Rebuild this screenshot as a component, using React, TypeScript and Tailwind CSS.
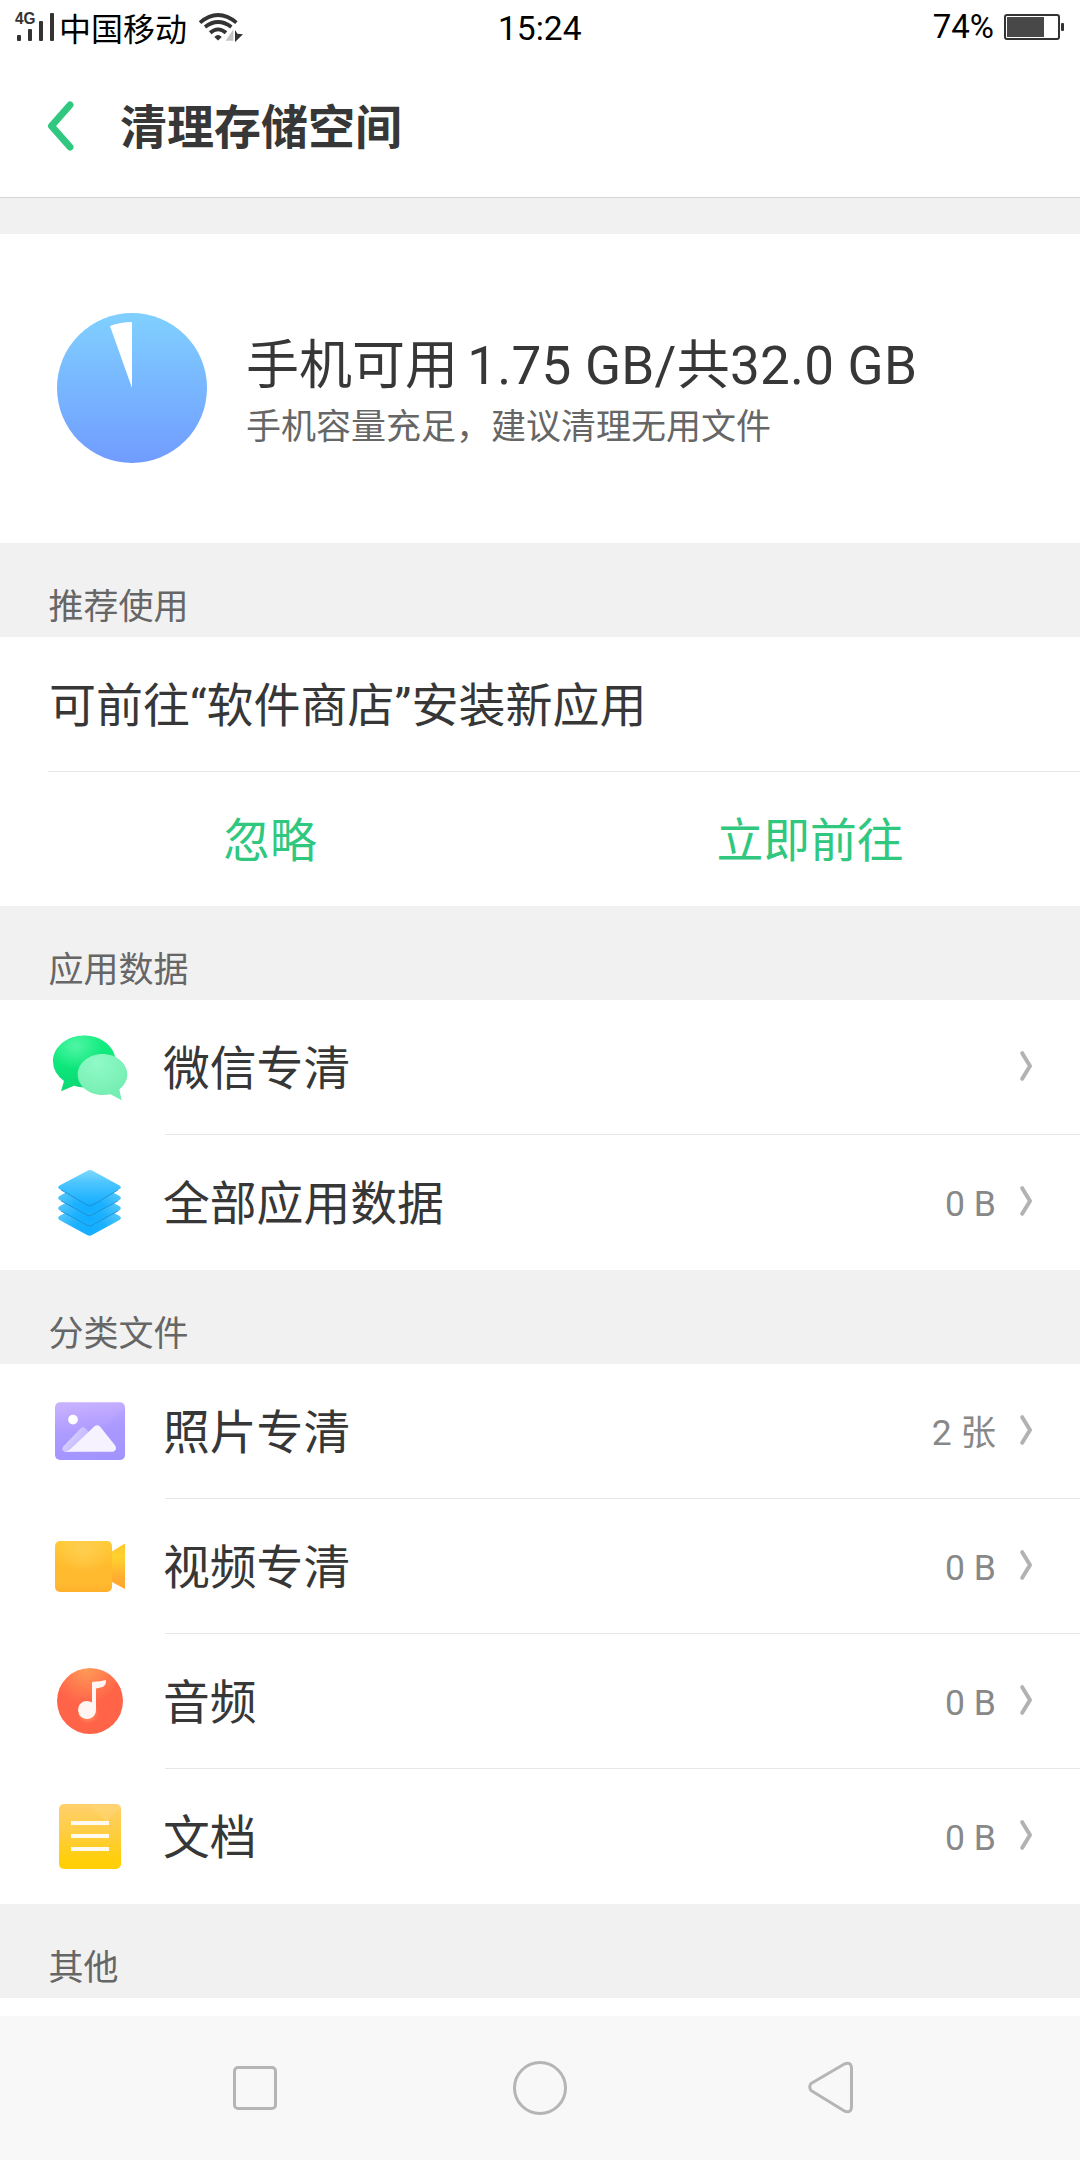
import React from 'react'

type Item = {
  label: string
  value?: string
  icon: React.ReactNode
}

function StatusBar() {
  return (
    <div className="flex h-[60px] items-start pl-[14px] pr-[16px] text-black">
      {/* Signal */}
      <svg className="mt-[10px] h-[34px] w-[42px]" viewBox="14 10 42 34" fill="#333">
        <text x="15" y="24.3" fontSize="16.5" fontWeight="700" fontFamily="Liberation Sans, sans-serif" textLength="20.5" lengthAdjust="spacingAndGlyphs">4G</text>
        <rect x="17" y="35" width="4" height="6" rx="1" />
        <rect x="28" y="29" width="4" height="12" rx="1" />
        <rect x="39" y="21" width="4" height="20" rx="1" />
        <rect x="50" y="13" width="4" height="28" rx="1" />
      </svg>
      <span className="ml-[3px] mt-[10px] w-[128px] text-[32px] leading-[40px]">中国移动</span>
      {/* Wifi */}
      <svg className="ml-[9px] mt-[10px] h-[34px] w-[52px]" viewBox="196 10 52 34" fill="none">
        <g stroke="#333" strokeWidth="3.8">
          <path d="M200 22.6Q218 7.4 236.400 22.600" />
          <path d="M205 27Q218 17 231.400 27" />
          <path d="M210.200 32.800Q218 26 226 32.800" />
        </g>
        <path d="M214.300 37Q218 32.800 221.800 37L218 40.500Z" fill="#333" />
        <path d="M225.600 40.800L233.400 29.200V40.800Z" fill="#c4c4c4" />
        <path d="M235 30L237.500 33.800L243 34.200L235 42Z" fill="#333" />
      </svg>
      <span className="ml-[250px] mt-[9px] text-[33.6px] leading-[40px]">15:24</span>
      <div className="ml-auto flex">
        <span className="mt-[7px] text-[33px] leading-[40px]">74%</span>
        <svg className="ml-[8px] mt-[12px] h-[30px] w-[62px]" viewBox="1002 12 62 30">
          <rect x="1005" y="15" width="54" height="24" rx="2" fill="none" stroke="#333" strokeWidth="2" />
          <rect x="1007" y="17" width="37" height="20" fill="#484848" />
          <rect x="1061" y="23" width="3" height="8" rx="1" fill="#333" />
        </svg>
      </div>
    </div>
  )
}

function TitleBar() {
  return (
    <div className="flex h-[138px] border-b border-[#d5d5d5] pl-[46px]">
      <svg className="mt-[38px] h-[56px] w-[30px]" viewBox="46 98 30 56" fill="none">
        <path d="M70 105L51.500 126L70 147" stroke="#30c77f" strokeWidth="7" strokeLinecap="round" strokeLinejoin="round" />
      </svg>
      <h1 className="ml-[44px] mt-[38px] text-[47px] leading-[60px] font-bold">清理存储空间</h1>
    </div>
  )
}

function StorageSummary() {
  return (
    <div className="flex h-[309px] bg-white pl-[57px]">
      <svg className="mt-[79px] h-[150px] w-[150px]" viewBox="0 0 150 150">
        <defs>
          <linearGradient id="pie" x1="0" y1="0" x2="0" y2="1">
            <stop offset="0" stopColor="#80d0ff" />
            <stop offset="1" stopColor="#709cff" />
          </linearGradient>
        </defs>
        <circle cx="75" cy="75" r="75" fill="url(#pie)" />
        <path d="M75 75L53 13Q63.500 9 75 9Z" fill="#fff" />
      </svg>
      <div className="ml-[39px]">
        <p className="mt-[100px] text-[53px] leading-[64px]">
          手机可用 <span className="-ml-[4px] tracking-[0.25px]">1.75 GB/共32.0 GB</span>
        </p>
        <p className="mt-[6px] text-[35px] leading-[48px] text-[#666]">手机容量充足，建议清理无用文件</p>
      </div>
    </div>
  )
}

function SectionLabel({ children }: { children: React.ReactNode }) {
  return <h2 className="h-[94px] pl-[48.5px] pt-[41px] text-[35px] leading-[48px] text-[#666]">{children}</h2>
}

function Chevron() {
  return (
    <svg className="h-[32px] w-[14px]" viewBox="0 0 14 32" fill="none">
      <path d="M3.200 3.200L11 16L3.200 28.800" stroke="#b2b2b2" strokeWidth="4" strokeLinecap="round" strokeLinejoin="round" />
    </svg>
  )
}

function ItemList({ items }: { items: Item[] }) {
  return (
    <div className="bg-white">
      {items.map((item, i) => (
        <div key={item.label} className="h-[135px]">
          <div className="flex h-[134px] items-center pl-[48px] pr-[47px]">
            {item.icon}
            <span className="ml-[31px] pt-[4px] text-[46.8px] leading-[60px]">{item.label}</span>
            <span className="ml-auto pt-[4px] text-[35.5px] leading-[48px] text-[#888]">{item.value}</span>
            <div className="-mt-[2px] ml-[23px]">
              <Chevron />
            </div>
          </div>
          {i < items.length - 1 && <div className="ml-[165px] h-px bg-[#e6e6e6]" />}
        </div>
      ))}
    </div>
  )
}

function WechatIcon() {
  return (
    <svg className="h-[84px] w-[84px]" viewBox="0 0 84 84">
      <defs>
        <linearGradient id="wxBig" x1="0" y1="0" x2="0" y2="1">
          <stop offset="0" stopColor="#12ee80" />
          <stop offset="0.500" stopColor="#0de77b" />
          <stop offset="1" stopColor="#0ad873" />
        </linearGradient>
        <radialGradient id="wxShine" cx="0.360" cy="0.200" r="0.450" gradientTransform="rotate(-18 0.36 0.2)">
          <stop offset="0" stopColor="#4ff5a5" />
          <stop offset="1" stopColor="#4ff5a5" stopOpacity="0" />
        </radialGradient>
        <radialGradient id="wxSmall" cx="0.400" cy="0.200" r="0.700">
          <stop offset="0" stopColor="#90fac7" />
          <stop offset="1" stopColor="#76eeb3" />
        </radialGradient>
      </defs>
      <path d="M36.300 10.400C53.600 10.400 67.600 21.900 67.600 36.300S53.600 62.400 36.300 62.400Q31 62.400 26 60.800L13 66.300L16 56Q5 48 5 36.300C5 21.900 19 10.400 36.300 10.400Z" fill="url(#wxBig)" />
      <ellipse cx="36.300" cy="36.400" rx="31" ry="25.700" fill="url(#wxShine)" />
      <path d="M54.500 29C68.200 29 79.300 38.200 79.300 49.500Q79.300 58 71.400 64.400L73.700 75.300L62.500 69.200Q58.500 70 54.500 70C40.800 70 29.700 60.800 29.700 49.500S40.800 29 54.500 29Z" fill="url(#wxSmall)" />
    </svg>
  )
}

function LayersIcon() {
  return (
    <svg className="h-[84px] w-[84px]" viewBox="0 0 84 84">
      <defs>
        <linearGradient id="layTop" x1="0" y1="0" x2="0" y2="1">
          <stop offset="0" stopColor="#7fd8fc" />
          <stop offset="0.350" stopColor="#4cc5ff" />
          <stop offset="1" stopColor="#13adff" />
        </linearGradient>
        <radialGradient id="layLow" cx="0.500" cy="0.800" r="0.550">
          <stop offset="0" stopColor="#12adff" />
          <stop offset="0.450" stopColor="#1cb1ff" />
          <stop offset="1" stopColor="#4bc2fa" />
        </radialGradient>
      </defs>
      {[58, 48.200, 38].map((y) => (
        <g key={y} transform={`translate(0 ${y})`}>
          <path d="M44 17Q41.500 18.500 39 17L11.500 2Q8.800 0 11.500 -2L39 -17Q41.500 -18.500 44 -17L71.500 -2Q74.200 0 71.500 2Z" fill="url(#layLow)" />
          {y < 58 && <path d="M13 2.800L39 17Q41.500 18.500 44 17L70 2.800" fill="none" stroke="#1c8fcf" strokeWidth="0.900" />}
        </g>
      ))}
      <path d="M39 11Q42 9.200 45 11L71.500 25.500Q74.200 27.300 71.500 29L45 44.700Q42 46.500 39 44.700L11.500 29Q8.800 27.300 11.500 25.500Z" fill="url(#layTop)" />
      <path d="M13 29.900L39 44.900Q42 46.700 45 44.900L70 29.900" fill="none" stroke="#1c8fcf" strokeWidth="0.900" />
    </svg>
  )
}

function PhotoIcon() {
  return (
    <svg className="h-[84px] w-[84px]" viewBox="0 0 84 84">
      <defs>
        <linearGradient id="phBg" x1="0.350" y1="0" x2="0.500" y2="1">
          <stop offset="0" stopColor="#c8b2ff" />
          <stop offset="0.500" stopColor="#ad9bff" />
          <stop offset="1" stopColor="#a294ff" />
        </linearGradient>
        <linearGradient id="phBack" x1="0" y1="0" x2="1" y2="0.600">
          <stop offset="0" stopColor="#e3deff" />
          <stop offset="1" stopColor="#bcb0ff" />
        </linearGradient>
      </defs>
      <rect x="7" y="13.300" width="70" height="57.700" rx="5" fill="url(#phBg)" />
      <path d="M77 19L56 40V71H72Q77 71 77 66Z" fill="#a294ff" opacity="0.250" />
      <circle cx="25" cy="30.600" r="4.900" fill="#fff" />
      <path d="M15.200 57.500L33 39Q35 37.300 37 39L42 44L26 62.800H17Q12.500 61.500 15.200 57.500Z" fill="url(#phBack)" />
      <path d="M16 62.500Q20 62.500 22.500 60L46.500 37.300Q49.300 35 52 37.500L67.200 56.500Q69.500 61 65 62.800H18Z" fill="#f6f2ff" />
    </svg>
  )
}

function VideoIcon() {
  return (
    <svg className="h-[84px] w-[84px]" viewBox="0 0 84 84">
      <defs>
        <linearGradient id="vdBody" x1="0" y1="0" x2="0" y2="1">
          <stop offset="0" stopColor="#ffcb36" />
          <stop offset="0.550" stopColor="#ffb92d" />
          <stop offset="0.800" stopColor="#ffbc30" />
          <stop offset="1" stopColor="#ffaf2c" />
        </linearGradient>
        <radialGradient id="vdShine" cx="0.500" cy="0.150" r="0.500">
          <stop offset="0" stopColor="#ffce50" />
          <stop offset="1" stopColor="#ffce50" stopOpacity="0" />
        </radialGradient>
        <linearGradient id="vdHorn" x1="0" y1="0" x2="0" y2="1">
          <stop offset="0" stopColor="#ffc62c" />
          <stop offset="0.300" stopColor="#ffd22e" />
          <stop offset="0.750" stopColor="#ffad30" />
          <stop offset="1" stopColor="#ffa62c" />
        </linearGradient>
      </defs>
      <path d="M63 28L76 20Q77 19.400 77 20V64.500Q77 65.200 76 64.600L63 57.500Z" fill="url(#vdHorn)" />
      <rect x="7" y="17" width="57" height="51" rx="5" fill="url(#vdBody)" />
      <rect x="7" y="17" width="57" height="51" rx="5" fill="url(#vdShine)" />
    </svg>
  )
}

function AudioIcon() {
  return (
    <svg className="h-[84px] w-[84px]" viewBox="0 0 84 84">
      <defs>
        <radialGradient id="auBg" cx="0.450" cy="0" r="0.550">
          <stop offset="0" stopColor="#ff9c57" />
          <stop offset="1" stopColor="#ff6348" />
        </radialGradient>
        <radialGradient id="auGlow">
          <stop offset="0.500" stopColor="#ff8558" />
          <stop offset="1" stopColor="#ff8558" stopOpacity="0" />
        </radialGradient>
      </defs>
      <circle cx="42" cy="42" r="33" fill="url(#auBg)" />
      <ellipse cx="40" cy="54" rx="11" ry="11" fill="url(#auGlow)" />
      <path d="M44 24Q44 22.800 45.500 22.700Q52.500 22.500 58 21Q58.500 27.500 52.500 28.600L48 29.500V51A9 9 0 1 1 44 43.500Z" fill="#fff6f4" />
    </svg>
  )
}

function DocIcon() {
  return (
    <svg className="h-[84px] w-[84px]" viewBox="0 0 84 84">
      <defs>
        <linearGradient id="dcBg" x1="0" y1="0" x2="0" y2="1">
          <stop offset="0" stopColor="#ffd06d" />
          <stop offset="0.450" stopColor="#ffcd40" />
          <stop offset="0.850" stopColor="#ffcf0c" />
          <stop offset="1" stopColor="#ffcf08" />
        </linearGradient>
      </defs>
      <rect x="11" y="10" width="62" height="65" rx="5" fill="url(#dcBg)" />
      <path d="M40 10H68Q73 10 73 13L58 27Z" fill="#ffda80" opacity="0.350" />
      <g fill="#fffaf0">
        <rect x="23" y="27" width="38" height="4" />
        <rect x="23" y="40" width="38" height="4" />
        <rect x="23" y="53" width="38" height="4" />
      </g>
    </svg>
  )
}

function NavBar() {
  return (
    <div className="mt-[18px] flex h-[144px] items-center bg-[#f8f8f8] pl-[233px]">
      <div className="h-[44px] w-[44px] rounded-[5px] border-[3px] border-[#b5b5b5]" />
      <div className="ml-[236px] h-[54px] w-[54px] rounded-full border-[3px] border-[#b5b5b5]" />
      <svg className="ml-[241px] h-[54px] w-[46px]" viewBox="0 0 46 54" fill="none">
        <path d="M3 22.500L36 3.200Q43.500 0 43.500 8V45Q43.500 53 36 49.800L3 29.500Q0.500 26 3 22.500Z" stroke="#b5b5b5" strokeWidth="3" strokeLinejoin="round" />
      </svg>
    </div>
  )
}

const appData: Item[] = [
  { label: '微信专清', icon: <WechatIcon /> },
  { label: '全部应用数据', value: '0 B', icon: <LayersIcon /> },
]

const files: Item[] = [
  { label: '照片专清', value: '2 张', icon: <PhotoIcon /> },
  { label: '视频专清', value: '0 B', icon: <VideoIcon /> },
  { label: '音频', value: '0 B', icon: <AudioIcon /> },
  { label: '文档', value: '0 B', icon: <DocIcon /> },
]

function App() {
  return (
    <div lang="zh-CN" className="h-[2160px] w-[1080px] overflow-hidden whitespace-nowrap bg-white font-['Roboto','Noto_Sans_CJK_SC',sans-serif] text-[#373737]">
      <StatusBar />
      <TitleBar />
      <div className="bg-[#f1f1f1] pt-[36px]">
        <StorageSummary />

        <SectionLabel>推荐使用</SectionLabel>
        <div className="h-[269px] bg-white">
          <p className="h-[134px] pl-[49px] pt-[39px] text-[47px] leading-[60px]">可前往“软件商店”安装新应用</p>
          <div className="ml-[48px] h-px bg-[#e6e6e6]" />
          <div className="grid grid-cols-2 pt-[39px] text-center text-[46.8px] leading-[60px] text-[#30c77f]">
            <button>忽略</button>
            <button>立即前往</button>
          </div>
        </div>

        <SectionLabel>应用数据</SectionLabel>
        <ItemList items={appData} />

        <SectionLabel>分类文件</SectionLabel>
        <ItemList items={files} />

        <SectionLabel>其他</SectionLabel>
      </div>
      <NavBar />
    </div>
  )
}

export default App
